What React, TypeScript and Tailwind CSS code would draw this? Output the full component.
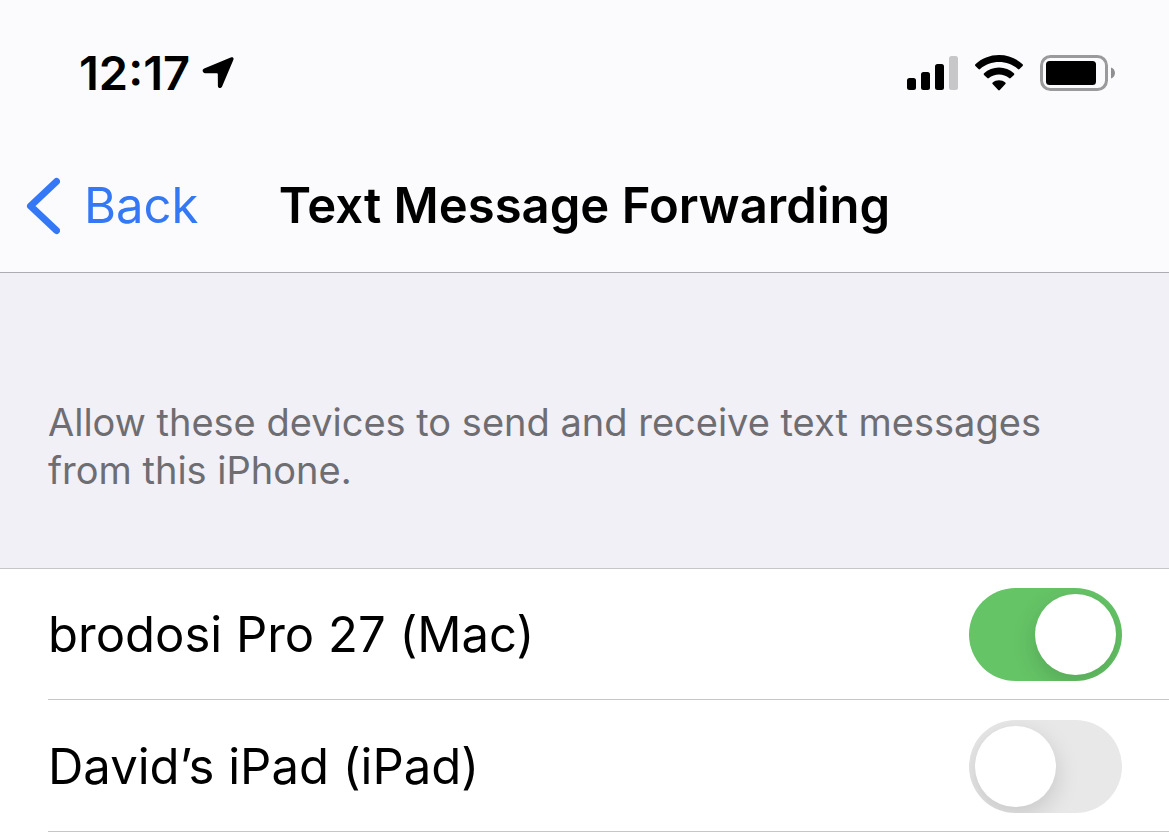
import { useState } from "react";

const initialDevices = [
    { id: "mac", name: "brodosi Pro 27 (Mac)", enabled: true },
    { id: "ipad", name: "David’s iPad (iPad)", enabled: false },
];

function LocationIcon() {
    return (
        <svg className="h-8 w-8" viewBox="0 0 32 32" fill="currentColor" aria-hidden="true">
            <path d="M28.700.5C30.900-.3 32.200 1 31.300 3L20.100 29.600C19.100 31.900 15.900 31.400 15.900 28.900L15.800 17.200C15.800 16.600 15.500 16.300 14.900 16.300L3.200 16.200C.3 16.200-.3 12.700 2.200 11.600Z" />
        </svg>
    );
}

function SignalIcon() {
    return (
        <svg className="h-[34px] w-[51px]" viewBox="0 0 51 34" fill="currentColor" aria-hidden="true">
            <rect x="0" y="22" width="9" height="12" rx="2.5" />
            <rect x="14" y="16" width="9" height="18" rx="2.5" />
            <rect x="28" y="8" width="9" height="26" rx="2.5" />
            <rect x="42" y="0" width="9" height="34" rx="2.5" fill="#c7c7c9" />
        </svg>
    );
}

function WifiIcon() {
    return (
        <svg className="h-9 w-12" viewBox="0 0 48 36" fill="currentColor" aria-hidden="true">
            <path d="M24 0C33 0 41.500 3.400 47.600 9.300Q48.400 10.100 47.600 10.900L44.500 14Q43.700 14.800 42.900 14C37.600 9.300 31 7 24 7S10.400 9.300 5.100 14Q4.300 14.800 3.500 14L.4 10.900Q-.4 10.100.4 9.300C6.500 3.400 15 0 24 0Z" />
            <path d="M24 12.600C29.700 12.600 34.900 14.700 38.900 18.300Q39.800 19.100 39 19.900L35.700 23.100Q34.900 23.800 34.100 23.100C31.300 20.700 27.800 19.400 24 19.400S16.700 20.700 13.900 23.100Q13.100 23.800 12.300 23.100L9 19.900Q8.200 19.100 9.100 18.300C13.100 14.700 18.300 12.600 24 12.600Z" />
            <path d="M24 25.200C26.400 25.200 28.500 26 30.300 27.400Q31.200 28.200 30.400 29L24.800 35Q24 35.800 23.200 35L17.600 29Q16.800 28.200 17.700 27.400C19.500 26 21.600 25.200 24 25.200Z" />
        </svg>
    );
}

function BatteryIcon() {
    return (
        <svg className="h-9 w-[75px]" viewBox="0 0 75 36" aria-hidden="true">
            <rect x="1.500" y="1.500" width="65" height="33" rx="9" fill="none" stroke="#9a9a9c" strokeWidth="3" />
            <rect x="6" y="6" width="50" height="24" rx="3.500" />
            <path d="M71 12.500C73.300 13.300 75 15.400 75 18S73.300 22.700 71 23.500Z" fill="#8f8f91" />
        </svg>
    );
}

type SwitchProps = {
    id: string;
    checked: boolean;
    onChange: (checked: boolean) => void;
};

function Switch({ id, checked, onChange }: SwitchProps) {
    return (
        <input
            id={id}
            type="checkbox"
            role="switch"
            checked={checked}
            onChange={(e) => onChange(e.target.checked)}
            className="flex h-[93px] w-[153px] shrink-0 cursor-pointer appearance-none items-center overflow-hidden rounded-full bg-[#e8e8e9] p-1.5 before:size-[81px] before:rounded-full before:bg-white before:shadow-[0_8px_24px_rgba(0,0,0,0.15)] before:content-[''] checked:justify-end checked:bg-[#65c466]"
        />
    );
}

export default function App() {
    const [devices, setDevices] = useState(initialDevices);

    const setEnabled = (id: string, enabled: boolean) =>
        setDevices(devices.map((d) => (d.id === id ? { ...d, enabled } : d)));

    return (
        <div className="min-h-screen bg-white font-['Inter',sans-serif] text-black">
            <header className="border-b border-[#adadb1] bg-[#fbfbfd]">
                {/* Status bar */}
                <div className="flex h-[146px] items-center justify-between pr-[54px] pl-[79px]">
                    <div className="flex items-center gap-3">
                        <span className="text-[47px] leading-14 font-semibold">12:17</span>
                        <LocationIcon />
                    </div>
                    <div className="flex items-center gap-[17px]">
                        <SignalIcon />
                        <WifiIcon />
                        <BatteryIcon />
                    </div>
                </div>

                {/* Navigation bar */}
                <div className="grid h-[126px] grid-cols-[1fr_auto_1fr] items-center px-[26px] pb-1.5 text-[49px] leading-[60px]">
                    <button type="button" className="flex cursor-pointer items-center gap-6 text-[#3478f6]">
                        <svg className="h-[58px] w-[34px]" viewBox="0 0 34 58" fill="none" aria-hidden="true">
                            <path d="M30.500 4.500 4.500 29 30.500 53.500" stroke="currentColor" strokeWidth="7" strokeLinecap="round" strokeLinejoin="round" />
                        </svg>
                        <span>Back</span>
                    </button>
                    <h1 className="font-semibold">Text Message Forwarding</h1>
                </div>
            </header>

            <main>
                <p className="bg-[#f1f0f6] px-12 pt-[125px] pb-[74px] text-[38px] leading-12 text-[#6d6d72]">
                    Allow these devices to send and receive text messages from this iPhone.
                </p>

                <ul className="shadow-[inset_0_1px_0_#c6c6c8]">
                    {devices.map((device) => (
                        <li key={device.id} className="pl-12">
                            <div className="flex h-[132px] items-center justify-between border-b border-[#c6c6c8] pt-px pr-[47px]">
                                <label htmlFor={device.id} className="pt-0.5 text-[49px] leading-[60px]">
                                    {device.name}
                                </label>
                                <Switch
                                    id={device.id}
                                    checked={device.enabled}
                                    onChange={(enabled) => setEnabled(device.id, enabled)}
                                />
                            </div>
                        </li>
                    ))}
                </ul>
            </main>
        </div>
    );
}
